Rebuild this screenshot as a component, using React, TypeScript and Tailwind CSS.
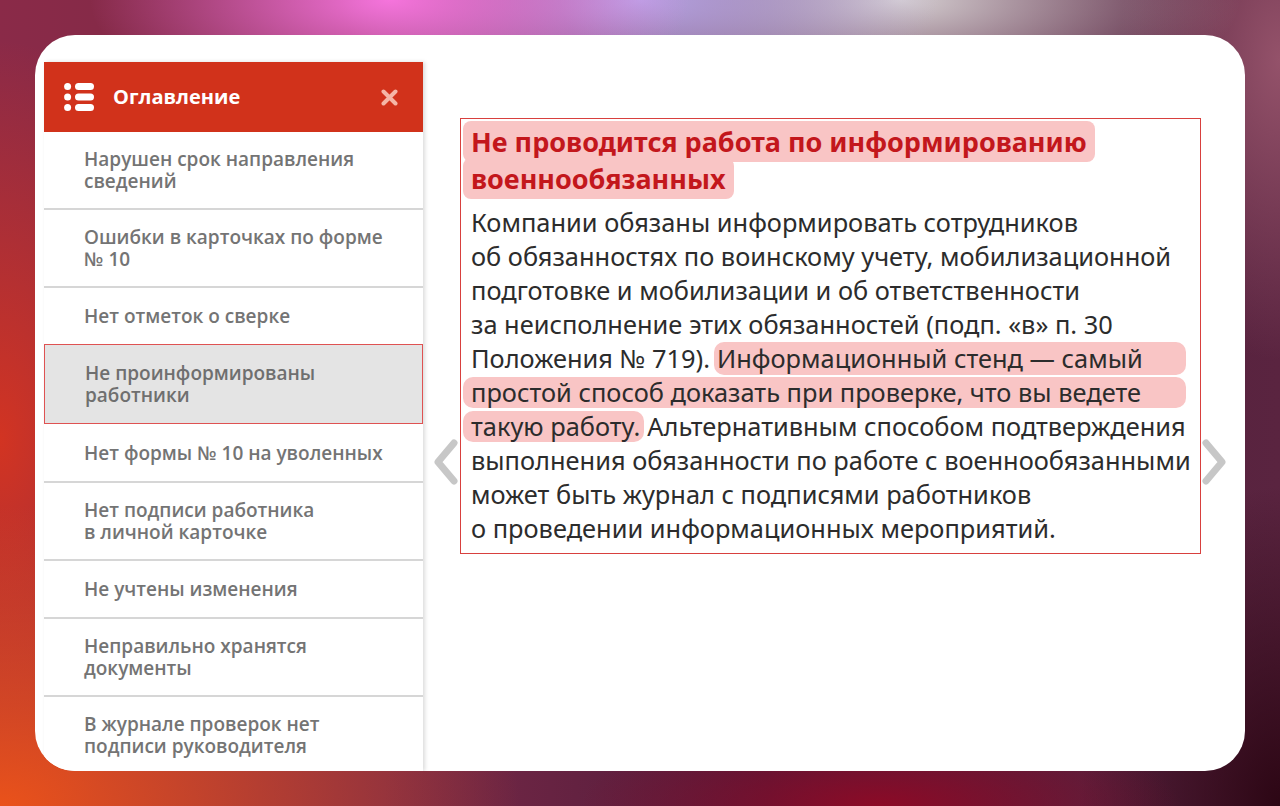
import React from "react";

const items: { lines: string[]; h: string; selected?: boolean; noSep?: boolean }[] = [
  { lines: ["Нарушен срок направления", "сведений"], h: "h-[78px]" },
  { lines: ["Ошибки в карточках по форме", "№ 10"], h: "h-[78px]" },
  { lines: ["Нет отметок о сверке"], h: "h-[56px]", noSep: true },
  { lines: ["Не проинформированы", "работники"], h: "h-[80px]", selected: true },
  { lines: ["Нет формы № 10 на уволенных"], h: "h-[59px]" },
  { lines: ["Нет подписи работника", "в личной карточке"], h: "h-[78px]" },
  { lines: ["Не учтены изменения"], h: "h-[58px]" },
  { lines: ["Неправильно хранятся", "документы"], h: "h-[78px]" },
  { lines: ["В журнале проверок нет", "подписи руководителя"], h: "h-[78px]" },
];

function ListIcon() {
  return (
    <svg width="30" height="28" viewBox="0 0 30 28" fill="#ffffff">
      <circle cx="3.6" cy="3.5" r="3.5" />
      <circle cx="3.6" cy="14" r="3.5" />
      <circle cx="3.6" cy="24.5" r="3.5" />
      <rect x="11" y="0" width="19" height="7" rx="3.5" />
      <rect x="11" y="10.5" width="19" height="7" rx="3.5" />
      <rect x="11" y="21" width="19" height="7" rx="3.5" />
    </svg>
  );
}

function CloseIcon() {
  return (
    <svg width="17" height="17" viewBox="0 0 17 17">
      <path d="M2.5 2.5 L14.5 14.5 M14.5 2.5 L2.5 14.5" stroke="#f5b6a6" strokeWidth="4" strokeLinecap="round" />
    </svg>
  );
}

function Chevron({ dir }: { dir: "left" | "right" }) {
  return (
    <svg width="26" height="48" viewBox="0 0 26 48" className="shrink-0 mt-[320px]">
      <path
        d={dir === "left" ? "M21 5 L5 24 L21 43" : "M5 5 L21 24 L5 43"}
        fill="none"
        stroke="#c7c7c7"
        strokeWidth="7"
        strokeLinecap="round"
        strokeLinejoin="round"
      />
    </svg>
  );
}

export default function App() {
  return (
    <div className="w-[1280px] h-[806px] p-[35px] bg-[#6a2038] bg-[image:radial-gradient(ellipse_300px_120px_at_390px_0px,#f574dc,transparent),radial-gradient(ellipse_300px_120px_at_640px_0px,#b6a4e6,transparent),radial-gradient(ellipse_340px_120px_at_900px_0px,#d6d0d2,transparent),radial-gradient(ellipse_520px_300px_at_0px_806px,#ea521a,transparent),radial-gradient(ellipse_300px_90px_at_880px_806px,#8c0a26,transparent),radial-gradient(ellipse_200px_320px_at_1280px_806px,#2c0614,transparent),radial-gradient(ellipse_160px_300px_at_1280px_60px,#94526a,transparent),radial-gradient(ellipse_200px_400px_at_0px_440px,#d23422,transparent),linear-gradient(to_right,#8a2a48,#7a2a48_30%,#4e1a3a_60%,#5a2440)]">
      <div className="w-full h-full bg-white rounded-[40px] overflow-hidden flex pl-[9px] pt-[27px]">
        <aside className="w-[379px] shrink-0 bg-white shadow-[2px_0_4px_rgba(0,0,0,0.14)] flex flex-col font-['Open_Sans',sans-serif]">
          <div className="h-[70px] shrink-0 bg-[#d1321b] flex items-center pl-[20px] pr-[25px]">
            <ListIcon />
            <div className="ml-[19px] text-white text-[20px] font-bold leading-none">Оглавление</div>
            <div className="ml-auto mt-[1px]">
              <CloseIcon />
            </div>
          </div>
          {items.map((it, i) => (
            <div
              key={i}
              className={
                it.h +
                " shrink-0 flex flex-col justify-center pl-[40px] text-[19px] font-semibold leading-[22px] " +
                (it.selected
                  ? "border border-[#df5252] bg-[#e4e4e4] text-[#6f6f6f] pl-[39px]"
                  : it.noSep
                  ? "text-[#747474]"
                  : "border-b-2 border-[#d6d6d6] text-[#747474]")
              }
            >
              {it.lines.map((l, j) => (
                <div key={j}>{l}</div>
              ))}
            </div>
          ))}
        </aside>

        <main className="flex items-start pt-[56px] pl-[10px]">
          <Chevron dir="left" />
          <div className="ml-[1px] w-[741px] shrink-0 border border-[#d8403e] pt-[4px] pb-[8px] pl-[2px] font-['Noto_Sans',sans-serif]">
            <h2 className="text-[#c3171c] font-bold text-[27px] leading-[37px]">
              <span className="bg-[#f9c5c5] rounded-[8px] px-2 py-[2px] box-decoration-clone">
                Не проводится работа по информированию
                <br />
                военнообязанных
              </span>
            </h2>
            <div className="mt-[8px] pl-2 text-[#2c2c2c] text-[25.4px] leading-[34px]">
              <div className="h-[34px]">Компании обязаны информировать сотрудников</div>
              <div className="h-[34px]">об обязанностях по воинскому учету, мобилизационной</div>
              <div className="h-[34px]">подготовке и мобилизации и об ответственности</div>
              <div className="h-[34px]">за неисполнение этих обязанностей (подп. «в» п. 30</div>
              <div className="h-[34px] w-[715px] flex items-center whitespace-nowrap">
                <span className="mr-[4px]">Положения № 719).</span>
                <span className="flex-1 h-[33px] flex items-center bg-[#f9c5c5] rounded-[10px] pl-[3px]">
                  Информационный стенд — самый
                </span>
              </div>
              <div className="h-[34px] -ml-2 w-[723px] flex items-center whitespace-nowrap">
                <span className="flex-1 h-[31px] flex items-center bg-[#f9c5c5] rounded-[10px] pl-2">
                  простой способ доказать при проверке, что вы ведете
                </span>
              </div>
              <div className="h-[34px] -ml-2 flex items-center whitespace-nowrap">
                <span className="h-[31px] flex items-center bg-[#f9c5c5] rounded-[10px] pl-2 pr-[4px]">
                  такую работу.
                </span>
                <span className="ml-[3px]">Альтернативным способом подтверждения</span>
              </div>
              <div className="h-[34px]">выполнения обязанности по работе с военнообязанными</div>
              <div className="h-[34px]">может быть журнал с подписями работников</div>
              <div className="h-[34px]">о проведении информационных мероприятий.</div>
            </div>
          </div>
          <Chevron dir="right" />
        </main>
      </div>
    </div>
  );
}
